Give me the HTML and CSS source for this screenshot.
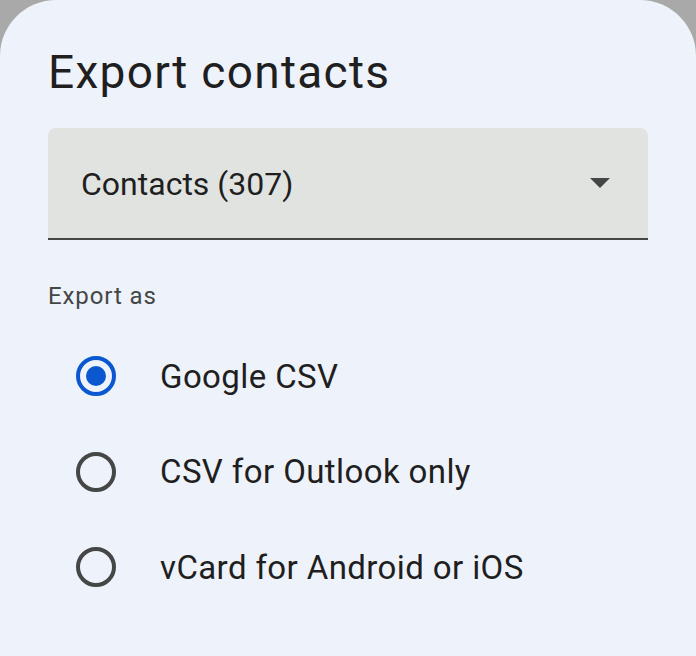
FILE: index.html
```html
<!DOCTYPE html>
<html>
<head>
<meta charset="utf-8">
<link rel="stylesheet" href="styles.css">
</head>
<body>
<div class="dialog">
  <h1 class="title">Export contacts</h1>
  <div class="select">
    <span class="select-text">Contacts (307)</span>
    <svg class="arrow" width="20" height="10" viewBox="0 0 20 10"><path d="M0 0h20L10 10z" fill="#444746"/></svg>
  </div>
  <div class="section-label">Export as</div>
  <div class="options">
    <div class="option">
      <span class="radio checked"><span class="dot"></span></span>
      <span class="label">Google CSV</span>
    </div>
    <div class="option">
      <span class="radio"></span>
      <span class="label">CSV for Outlook only</span>
    </div>
    <div class="option">
      <span class="radio"></span>
      <span class="label">vCard for Android or iOS</span>
    </div>
  </div>
</div>
</body>
</html>
```

FILE: styles.css
```css
html, body {
  margin: 0;
  padding: 0;
  background: #a9a9a9;
}
body {
  width: 696px;
  height: 656px;
  overflow: hidden;
  font-family: Roboto, "Open Sans", sans-serif;
}
.dialog {
  background: #eef2fb;
  border-radius: 56px 56px 0 0;
  height: 656px;
  padding: 0 48px;
  box-sizing: border-box;
}
.title {
  margin: 0;
  padding-top: 46px;
  font-size: 46px;
  font-weight: 400;
  letter-spacing: 1.3px;
  color: #1f1f1f;
  line-height: 52px;
  height: 82px;
}
.select {
  height: 110px;
  background: #e1e3e1;
  border-radius: 8px 8px 0 0;
  border-bottom: 2px solid #444746;
  display: flex;
  align-items: center;
  justify-content: space-between;
  padding: 0 38px 0 33px;
}
.select-text {
  font-size: 32px;
  color: #1f1f1f;
  line-height: 40px;
  padding-top: 2px;
}
.section-label {
  margin-top: 42px;
  font-size: 24px;
  letter-spacing: 0.9px;
  color: #444746;
  line-height: 28px;
}
.options {
  display: flex;
  flex-direction: column;
  margin-top: 42px;
  gap: 47.5px;
}
.option {
  display: flex;
  align-items: center;
  height: 48px;
  padding-left: 28px;
}
.radio {
  width: 32px;
  height: 32px;
  border: 4px solid #444746;
  border-radius: 50%;
  display: flex;
  align-items: center;
  justify-content: center;
  flex-shrink: 0;
}
.radio.checked {
  border-color: #0b57d0;
}
.dot {
  width: 20px;
  height: 20px;
  border-radius: 50%;
  background: #0b57d0;
}
.label {
  margin-left: 44px;
  font-size: 33px;
  letter-spacing: 0.4px;
  color: #1f1f1f;
}
```
